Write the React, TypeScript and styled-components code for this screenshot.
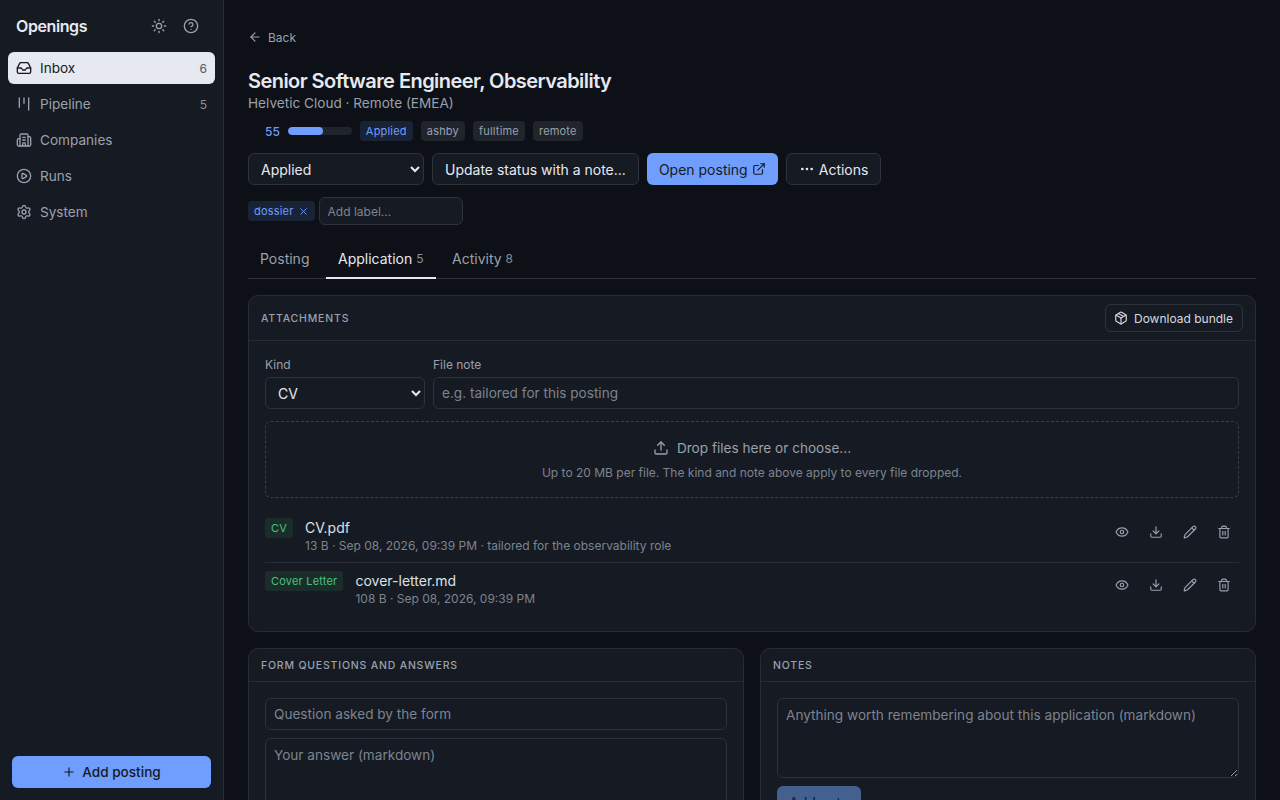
import React from "react";
import styled, { createGlobalStyle } from "styled-components";
import {
  ArrowLeft,
  Building2,
  CircleHelp,
  CirclePlay,
  Download,
  Ellipsis,
  ExternalLink,
  Eye,
  Inbox,
  Kanban,
  Package,
  Pencil,
  Plus,
  Settings,
  Sun,
  Trash2,
  Upload,
  X,
} from "lucide-react";

const GlobalStyle = createGlobalStyle`
  html, body {
    margin: 0;
    height: 100%;
    overflow: hidden;
    background: #0d1016;
    color-scheme: dark;
  }
  * {
    box-sizing: border-box;
  }
  body, button, input, select, textarea {
    font-family: "Inter", "Liberation Sans", sans-serif;
  }
`;

const Shell = styled.div`
  display: flex;
  height: 800px;
  overflow: hidden;
`;

const Sidebar = styled.aside`
  width: 224px;
  flex-shrink: 0;
  display: flex;
  flex-direction: column;
  background: #161a22;
  border-right: 1px solid #282c35;
  padding: 0 8px;
`;

const Brand = styled.div`
  height: 52px;
  display: flex;
  align-items: center;
  padding: 0 8px;
  color: #e6e9ef;
  font-size: 16px;
  font-weight: 600;
  letter-spacing: -0.4px;
`;

const BrandName = styled.span`
  flex: 1;
`;

const BrandIcons = styled.div`
  display: flex;
  gap: 16px;
  margin-right: 8px;
  color: #9aa1ad;
  line-height: 0;
`;

const Nav = styled.nav`
  display: flex;
  flex-direction: column;
  gap: 4px;
  flex: 1;
`;

const NavItem = styled.a<{ $active?: boolean }>`
  height: 32px;
  display: flex;
  align-items: center;
  gap: 8px;
  padding: 0 8px;
  border-radius: 6px;
  font-size: 13.6px;
  background: ${({ $active }) => ($active ? "#e6e9ef" : "transparent")};
  color: ${({ $active }) => ($active ? "#161a22" : "#9aa1ad")};
`;

const NavLabel = styled.span`
  flex: 1;
`;

const NavCount = styled.span<{ $active?: boolean }>`
  font-size: 12px;
  color: ${({ $active }) => ($active ? "#4f5664" : "#8a919d")};
`;

const AddPosting = styled.button`
  height: 32px;
  margin: 0 4px 12px;
  display: flex;
  align-items: center;
  justify-content: center;
  gap: 6px;
  border: none;
  border-radius: 6px;
  background: #6f9eff;
  color: #161a22;
  font-size: 13.6px;
  font-weight: 500;
`;

const Main = styled.main`
  flex: 1;
  min-width: 0;
  padding: 27px 24px 0;
  overflow: hidden;
`;

const BackLink = styled.a`
  display: flex;
  align-items: center;
  gap: 6px;
  height: 20px;
  color: #9aa1ad;
  font-size: 12px;
`;

const Title = styled.h1`
  margin: 20px 0 0;
  font-size: 20px;
  line-height: 28px;
  font-weight: 600;
  letter-spacing: -0.55px;
  color: #e6e9ef;
`;

const Subtitle = styled.div`
  font-size: 13.6px;
  line-height: 16px;
  color: #9aa1ad;
`;

const MetaRow = styled.div`
  display: flex;
  align-items: center;
  gap: 8px;
  margin-top: 10px;
  padding-left: 17px;
`;

const ScoreValue = styled.span`
  font-size: 12px;
  font-weight: 500;
  color: #6f9eff;
`;

const ScoreTrack = styled.div`
  width: 64px;
  height: 8px;
  border-radius: 4px;
  background: #20242d;
  overflow: hidden;
`;

const ScoreFill = styled.div`
  height: 100%;
  border-radius: 4px;
  background: #6f9eff;
`;

const Badge = styled.span<{ $tone?: "blue" | "green" }>`
  display: inline-flex;
  align-items: center;
  gap: 4px;
  height: 20px;
  padding: 0 6px;
  border-radius: 4px;
  font-size: 11px;
  letter-spacing: 0.2px;
  background: ${({ $tone }) =>
    $tone === "blue" ? "#192336" : $tone === "green" ? "#1b2d2a" : "#20242d"};
  color: ${({ $tone }) =>
    $tone === "blue" ? "#6f9eff" : $tone === "green" ? "#46c47e" : "#9aa1ad"};
`;

const ActionRow = styled.div`
  display: flex;
  gap: 8px;
  margin-top: 12px;
`;

const Select = styled.select<{ $width: number }>`
  width: ${({ $width }) => $width}px;
  height: 32px;
  padding: 0 8px;
  border: 1px solid #2d323c;
  border-radius: 6px;
  background: #161a22;
  color: #e6e9ef;
  font-size: 14px;
`;

const Button = styled.button<{ $primary?: boolean }>`
  height: 32px;
  padding: 0 12px;
  display: inline-flex;
  align-items: center;
  gap: 4px;
  border-radius: 6px;
  border: ${({ $primary }) => ($primary ? "none" : "1px solid #2d323c")};
  background: ${({ $primary }) => ($primary ? "#6f9eff" : "#161a22")};
  color: ${({ $primary }) => ($primary ? "#161a22" : "#e6e9ef")};
  font-size: 14px;
`;

const LabelRow = styled.div`
  display: flex;
  align-items: center;
  gap: 4px;
  margin-top: 12px;
`;

const LabelInput = styled.input`
  width: 144px;
  height: 28px;
  padding: 0 8px;
  border: 1px solid #2d323c;
  border-radius: 6px;
  background: #161a22;
  color: #e6e9ef;
  font-size: 12px;
  &::placeholder {
    color: #7d8490;
  }
`;

const Tabs = styled.div`
  display: flex;
  gap: 4.5px;
  margin-top: 17px;
  border-bottom: 1px solid #2d323c;
`;

const Tab = styled.div<{ $active?: boolean }>`
  height: 37px;
  display: flex;
  align-items: center;
  gap: 4px;
  padding: 0 12px 2px;
  font-size: 14px;
  color: ${({ $active }) => ($active ? "#e6e9ef" : "#9aa1ad")};
  border-bottom: 2px solid ${({ $active }) => ($active ? "#e6e9ef" : "transparent")};
  margin-bottom: -1px;
`;

const TabCount = styled.span`
  font-size: 12px;
  color: #8a919d;
`;

const Card = styled.section`
  background: #161a22;
  border: 1px solid #282c35;
  border-radius: 10px;
`;

const AttachmentsCard = styled(Card)`
  margin-top: 16px;
`;

const CardHeader = styled.header<{ $tall?: boolean }>`
  height: ${({ $tall }) => ($tall ? 45 : 33)}px;
  display: flex;
  align-items: center;
  justify-content: space-between;
  padding: 0 12px;
  border-bottom: 1px solid #282c35;
`;

const CardTitle = styled.h2`
  margin: 0;
  font-size: 10.5px;
  font-weight: 500;
  letter-spacing: 0.8px;
  text-transform: uppercase;
  color: #9aa1ad;
`;

const SmallButton = styled.button`
  height: 28px;
  padding: 0 9px 0 8px;
  display: inline-flex;
  align-items: center;
  gap: 6px;
  border: 1px solid #2d323c;
  border-radius: 6px;
  background: transparent;
  color: #d5d9e0;
  font-size: 12px;
`;

const CardBody = styled.div`
  padding: 16px;
`;

const UploadFields = styled.div`
  display: flex;
  gap: 8px;
`;

const Field = styled.label<{ $grow?: boolean }>`
  display: flex;
  flex-direction: column;
  gap: 4px;
  font-size: 12px;
  line-height: 16px;
  color: #9aa1ad;
  flex: ${({ $grow }) => ($grow ? 1 : "none")};
`;

const TextInput = styled.input`
  width: 100%;
  height: 32px;
  padding: 0 8px;
  border: 1px solid #2d323c;
  border-radius: 6px;
  background: #161a22;
  color: #e6e9ef;
  font-size: 13.6px;
  &::placeholder {
    color: #7d8490;
  }
`;

const TextArea = styled.textarea<{ $height: number }>`
  display: block;
  width: 100%;
  height: ${({ $height }) => $height}px;
  padding: 7px 8px;
  border: 1px solid #2d323c;
  border-radius: 6px;
  background: #161a22;
  color: #e6e9ef;
  font-size: 13.6px;
  line-height: 18px;
  &::placeholder {
    color: #7d8490;
  }
`;

const DropZone = styled.div`
  height: 77px;
  margin-top: 12px;
  display: flex;
  flex-direction: column;
  align-items: center;
  justify-content: center;
  gap: 9px;
  border: 1px dashed #3a3f4a;
  border-radius: 6px;
`;

const DropTitle = styled.div`
  display: flex;
  align-items: center;
  gap: 8px;
  font-size: 13.6px;
  color: #9aa1ad;
`;

const DropHint = styled.div`
  font-size: 12px;
  color: #7d8490;
`;

const FileList = styled.div`
  margin-top: 12px;
`;

const FileRow = styled.div`
  display: flex;
  align-items: flex-start;
  gap: 12px;
  padding: 8px 0;
  & + & {
    border-top: 1px solid #282c35;
  }
`;

const FileInfo = styled.div`
  flex: 1;
  min-width: 0;
`;

const FileName = styled.div`
  font-size: 14px;
  line-height: 20px;
  color: #dde0e6;
`;

const FileMeta = styled.div`
  font-size: 12px;
  line-height: 16px;
  color: #7d8490;
`;

const FileActions = styled.div`
  display: flex;
  align-items: center;
  gap: 20px;
  padding: 7px 8px 0 0;
  color: #9aa1ad;
  line-height: 0;
`;

const Columns = styled.div`
  display: grid;
  grid-template-columns: 1fr 1fr;
  gap: 16px;
  margin-top: 16px;
`;

const Stack = styled.div`
  display: flex;
  flex-direction: column;
  gap: 8px;
`;

const AddNote = styled.button`
  align-self: flex-start;
  height: 32px;
  padding: 0 12px;
  border: none;
  border-radius: 6px;
  background: #43608f;
  color: #161a22;
  font-size: 14px;
`;

const files = [
  { kind: "CV", name: "CV.pdf", meta: "13 B · Sep 08, 2026, 09:39 PM · tailored for the observability role" },
  { kind: "Cover Letter", name: "cover-letter.md", meta: "108 B · Sep 08, 2026, 09:39 PM" },
];

export default function App() {
  return (
    <Shell>
      <GlobalStyle />
      <Sidebar>
        <Brand>
          <BrandName>Openings</BrandName>
          <BrandIcons>
            <Sun size={16} />
            <CircleHelp size={16} />
          </BrandIcons>
        </Brand>
        <Nav>
          <NavItem $active>
            <Inbox size={16} />
            <NavLabel>Inbox</NavLabel>
            <NavCount $active>6</NavCount>
          </NavItem>
          <NavItem>
            <Kanban size={16} />
            <NavLabel>Pipeline</NavLabel>
            <NavCount>5</NavCount>
          </NavItem>
          <NavItem>
            <Building2 size={16} />
            <NavLabel>Companies</NavLabel>
          </NavItem>
          <NavItem>
            <CirclePlay size={16} />
            <NavLabel>Runs</NavLabel>
          </NavItem>
          <NavItem>
            <Settings size={16} />
            <NavLabel>System</NavLabel>
          </NavItem>
        </Nav>
        <AddPosting>
          <Plus size={14} />
          Add posting
        </AddPosting>
      </Sidebar>
      <Main>
        <BackLink>
          <ArrowLeft size={14} />
          Back
        </BackLink>
        <Title>Senior Software Engineer, Observability</Title>
        <Subtitle>Helvetic Cloud · Remote (EMEA)</Subtitle>
        <MetaRow>
          <ScoreValue>55</ScoreValue>
          <ScoreTrack>
            <ScoreFill style={{ width: "55%" }} />
          </ScoreTrack>
          <Badge $tone="blue">Applied</Badge>
          <Badge>ashby</Badge>
          <Badge>fulltime</Badge>
          <Badge>remote</Badge>
        </MetaRow>
        <ActionRow>
          <Select $width={176} defaultValue="Applied">
            <option>Applied</option>
          </Select>
          <Button>Update status with a note...</Button>
          <Button $primary>
            Open posting
            <ExternalLink size={14} />
          </Button>
          <Button>
            <Ellipsis size={16} />
            Actions
          </Button>
        </ActionRow>
        <LabelRow>
          <Badge $tone="blue">
            dossier
            <X size={11} />
          </Badge>
          <LabelInput placeholder="Add label..." />
        </LabelRow>
        <Tabs>
          <Tab>Posting</Tab>
          <Tab $active>
            Application <TabCount>5</TabCount>
          </Tab>
          <Tab>
            Activity <TabCount>8</TabCount>
          </Tab>
        </Tabs>
        <AttachmentsCard>
          <CardHeader $tall>
            <CardTitle>Attachments</CardTitle>
            <SmallButton>
              <Package size={14} />
              Download bundle
            </SmallButton>
          </CardHeader>
          <CardBody>
            <UploadFields>
              <Field>
                Kind
                <Select $width={160} defaultValue="CV">
                  <option>CV</option>
                </Select>
              </Field>
              <Field $grow>
                File note
                <TextInput placeholder="e.g. tailored for this posting" />
              </Field>
            </UploadFields>
            <DropZone>
              <DropTitle>
                <Upload size={16} />
                Drop files here or choose...
              </DropTitle>
              <DropHint>Up to 20 MB per file. The kind and note above apply to every file dropped.</DropHint>
            </DropZone>
            <FileList>
              {files.map((file) => (
                <FileRow key={file.name}>
                  <Badge $tone="green">{file.kind}</Badge>
                  <FileInfo>
                    <FileName>{file.name}</FileName>
                    <FileMeta>{file.meta}</FileMeta>
                  </FileInfo>
                  <FileActions>
                    <Eye size={14} />
                    <Download size={14} />
                    <Pencil size={14} />
                    <Trash2 size={14} />
                  </FileActions>
                </FileRow>
              ))}
            </FileList>
          </CardBody>
        </AttachmentsCard>
        <Columns>
          <Card>
            <CardHeader>
              <CardTitle>Form questions and answers</CardTitle>
            </CardHeader>
            <CardBody>
              <Stack>
                <TextInput placeholder="Question asked by the form" />
                <TextArea $height={120} placeholder="Your answer (markdown)" />
              </Stack>
            </CardBody>
          </Card>
          <Card>
            <CardHeader>
              <CardTitle>Notes</CardTitle>
            </CardHeader>
            <CardBody>
              <Stack>
                <TextArea $height={80} placeholder="Anything worth remembering about this application (markdown)" />
                <AddNote>Add note</AddNote>
              </Stack>
            </CardBody>
          </Card>
        </Columns>
      </Main>
    </Shell>
  );
}
